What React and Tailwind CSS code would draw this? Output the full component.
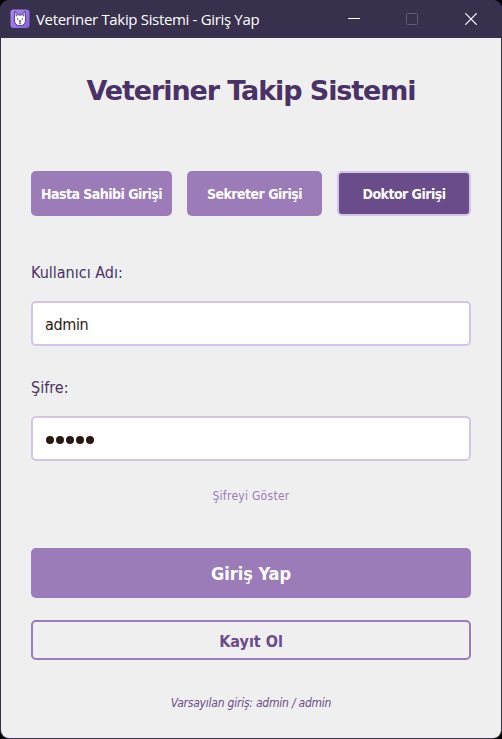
import React from "react";

function DogLogo() {
  return (
    <svg width="20" height="20" viewBox="0 0 20 20" className="shrink-0">
      <defs>
        <linearGradient id="logo" x1="0" y1="0" x2="1" y2="1">
          <stop offset="0" stopColor="#ad86f5" />
          <stop offset="1" stopColor="#8261dc" />
        </linearGradient>
      </defs>
      <rect x="0.5" y="0.5" width="19" height="18.5" rx="3" fill="url(#logo)" />
      <path d="M5 2.2 8.2 6h3.6L15 2.2l.6 7.6-.5 4.2-2.6 2.4h-5L4.9 14l-.5-4.2z" fill="#fff" stroke="#3b2d61" strokeWidth="0.9" strokeLinejoin="round" />
      <path d="M5.7 4.4 7.4 6.4 6 7.8zM14.3 4.4 12.6 6.4 14 7.8z" fill="#5c4391" />
      <circle cx="7.6" cy="9.9" r="0.7" fill="#332a4e" />
      <circle cx="12.4" cy="9.9" r="0.7" fill="#332a4e" />
      <path d="M8.5 11.6h3L10 13.6z" fill="#332a4e" />
      <path d="M10 13v1.4M8.6 14.8 10 14.2l1.4.6" fill="none" stroke="#332a4e" strokeWidth="0.6" />
    </svg>
  );
}

function TitleBar() {
  return (
    <header className="flex h-[38px] shrink-0 items-center bg-[#37314d] pl-[10px]">
      <DogLogo />
      <span className="ml-[6px] whitespace-nowrap font-['Open_Sans','Noto_Sans',sans-serif] text-[15px] leading-5 tracking-[-0.33px] text-white">
        Veteriner Takip Sistemi - Giriş Yap
      </span>
      <div className="ml-auto flex items-center pr-[25px]">
        <svg width="12" height="12" viewBox="0 0 12 12">
          <path d="M0 5.5h12" stroke="#fff" />
        </svg>
        <svg width="12" height="12" viewBox="0 0 12 12" className="ml-[46px]">
          <rect x="0.5" y="0.5" width="11" height="11" rx="1" fill="none" stroke="#625d74" />
        </svg>
        <svg width="12" height="12" viewBox="0 0 12 12" className="ml-[47px]">
          <path d="M.3.3l11.4 11.4M11.7.3.3 11.7" stroke="#fff" strokeWidth="1.2" />
        </svg>
      </div>
    </header>
  );
}

export default function App() {
  return (
    <div className="h-[739px] w-[502px] bg-black">
      <div className="flex h-full w-full flex-col overflow-hidden rounded-[9px] bg-[#37314d]">
        <TitleBar />
        <main className="mx-px mb-px flex flex-1 flex-col rounded-b-[8px] bg-[#efefef] px-[30px] font-['DejaVu_Sans_Condensed','DejaVu_Sans',sans-serif]">
          <h1 className="mt-[35px] whitespace-nowrap text-center font-['DejaVu_Sans',sans-serif] text-[27px] font-bold leading-9 tracking-[-1.1px] text-[#4a3266]">
            Veteriner Takip Sistemi
          </h1>
          <div className="mt-[62px] flex h-[45px] gap-[15px] whitespace-nowrap text-[14px] font-bold tracking-[-0.52px] text-white">
            <button className="w-[141px] rounded-[5px] bg-[#9b7bb8] pt-px">Hasta Sahibi Girişi</button>
            <button className="w-[135px] rounded-[5px] bg-[#9b7bb8] pt-px">Sekreter Girişi</button>
            <button className="w-[134px] rounded-[5px] border-2 border-[#d4c5e8] bg-[#6b4c8a] pt-px">Doktor Girişi</button>
          </div>
          <label className="mt-[47px] text-[16px] leading-5 text-[#4a3266]">Kullanıcı Adı:</label>
          <input
            defaultValue="admin"
            className="mt-[18px] h-[45px] shrink-0 rounded-[5px] border-2 border-[#d4c5e8] bg-white px-3 pt-px text-[16px] tracking-[-0.35px] text-[#2c1810] outline-none"
          />
          <label className="mt-[32px] text-[16px] leading-5 text-[#4a3266]">Şifre:</label>
          <div className="mt-[18px] flex h-[45px] shrink-0 items-center gap-[2px] rounded-[5px] border-2 border-[#d4c5e8] bg-white px-[13px] pt-[3px]">
            {[0, 1, 2, 3, 4].map((n) => (
              <span key={n} className="size-[8px] rounded-full bg-[#2c1810]" />
            ))}
          </div>
          <button className="mt-[27px] text-[12px] leading-4 tracking-[0.28px] text-[#9b7bb8]">Şifreyi Göster</button>
          <button className="mt-[44px] h-[50px] shrink-0 rounded-[5px] bg-[#9b7bb8] text-[18px] font-bold text-white">Giriş Yap</button>
          <button className="mt-[22px] h-[40px] shrink-0 rounded-[5px] border-2 border-[#9b7bb8] pt-[3px] text-[16px] font-bold text-[#6b4c8a]">Kayıt Ol</button>
          <p className="mt-[35px] text-center text-[12px] italic leading-4 tracking-[-0.22px] text-[#6b4c8a]">Varsayılan giriş: admin / admin</p>
        </main>
      </div>
    </div>
  );
}
